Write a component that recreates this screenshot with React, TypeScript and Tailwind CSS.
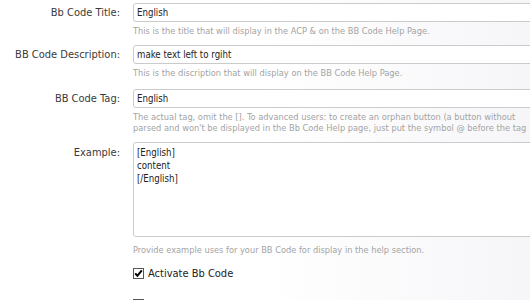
// App.tsx

import React from "react";

interface FieldRowProps {
  label: string;
  value: string;
  hint: React.ReactNode;
  last?: boolean;
}

const FONT = { fontFamily: '"DejaVu Sans", Tahoma, Verdana, sans-serif' };

const Hint: React.FC<{ children: React.ReactNode; className?: string }> = ({ children, className }) => (
  <div className={`text-[9.2px] leading-[11px] text-[#a3a3a3] whitespace-nowrap font-stretch-condensed ${className ?? ""}`}>
    {children}
  </div>
);

const FieldRow: React.FC<FieldRowProps> = ({ label, value, hint }) => (
  <>
    <div className="text-right text-[11px] text-[#3a3a3a] font-stretch-condensed leading-[19px]">{label}</div>
    <div>
      <div className="w-[420px] h-[19px] border border-[#cbcbcb] rounded-[3px] bg-white px-[3px] text-[9.6px] leading-[17px] text-[#222] font-stretch-condensed">
        {value}
      </div>
      {hint}
    </div>
  </>
);

const CheckBox: React.FC<{ checked?: boolean }> = ({ checked }) => (
  <span className="relative inline-block w-[11px] h-[11px] border border-[#555] bg-white shrink-0">
    {checked && (
      <svg viewBox="0 0 11 11" className="absolute -left-px -top-px w-[11px] h-[11px]">
        <path d="M2.2 5.4 L4.4 7.8 L8.8 2.4" fill="none" stroke="#000" strokeWidth="2" />
      </svg>
    )}
  </span>
);

export default function App() {
  return (
    <div
      className="w-[530px] h-[300px] overflow-hidden bg-gradient-to-r from-white from-50% to-[#f6f6f9] pt-[3px]"
      style={FONT}
    >
      <div className="grid grid-cols-[120px_1fr] gap-x-[13px]">
        <FieldRow
          label="Bb Code Title:"
          value="English"
          hint={<Hint className="pt-[3px] pb-[9px]">This is the title that will display in the ACP &amp; on the BB Code Help Page.</Hint>}
        />
        <FieldRow
          label="BB Code Description:"
          value="make text left to rgiht"
          hint={<Hint className="pt-[3px] pb-[11px]">This is the discription that will display on the BB Code Help Page.</Hint>}
        />
        <FieldRow
          label="BB Code Tag:"
          value="English"
          hint={
            <Hint className="pt-[3px] pb-[9px]">
              The actual tag, omit the []. To advanced users: to create an orphan button (a button without
              <br />
              parsed and won't be displayed in the Bb Code Help page, just put the symbol @ before the tag
            </Hint>
          }
        />

        <div className="text-right text-[11px] text-[#3a3a3a] font-stretch-condensed leading-[13px] pt-[3.5px]">Example:</div>
        <div>
          <div className="w-[420px] h-[95px] border border-[#cbcbcb] rounded-[3px] bg-white px-[3px] pt-[2.5px] text-[9.6px] leading-[13px] text-[#222] font-stretch-condensed">
            <div>[English]</div>
            <div>content</div>
            <div>[/English]</div>
          </div>
          <Hint className="pt-[6.5px]">Provide example uses for your BB Code for display in the help section.</Hint>

          <div className="flex items-center gap-[4px] mt-[12.5px]">
            <CheckBox checked />
            <span className="text-[11px] leading-[13px] text-[#222] font-stretch-condensed">Activate Bb Code</span>
          </div>
          <div className="flex items-center gap-[4px] mt-[19px]">
            <CheckBox />
          </div>
        </div>
      </div>
    </div>
  );
}
